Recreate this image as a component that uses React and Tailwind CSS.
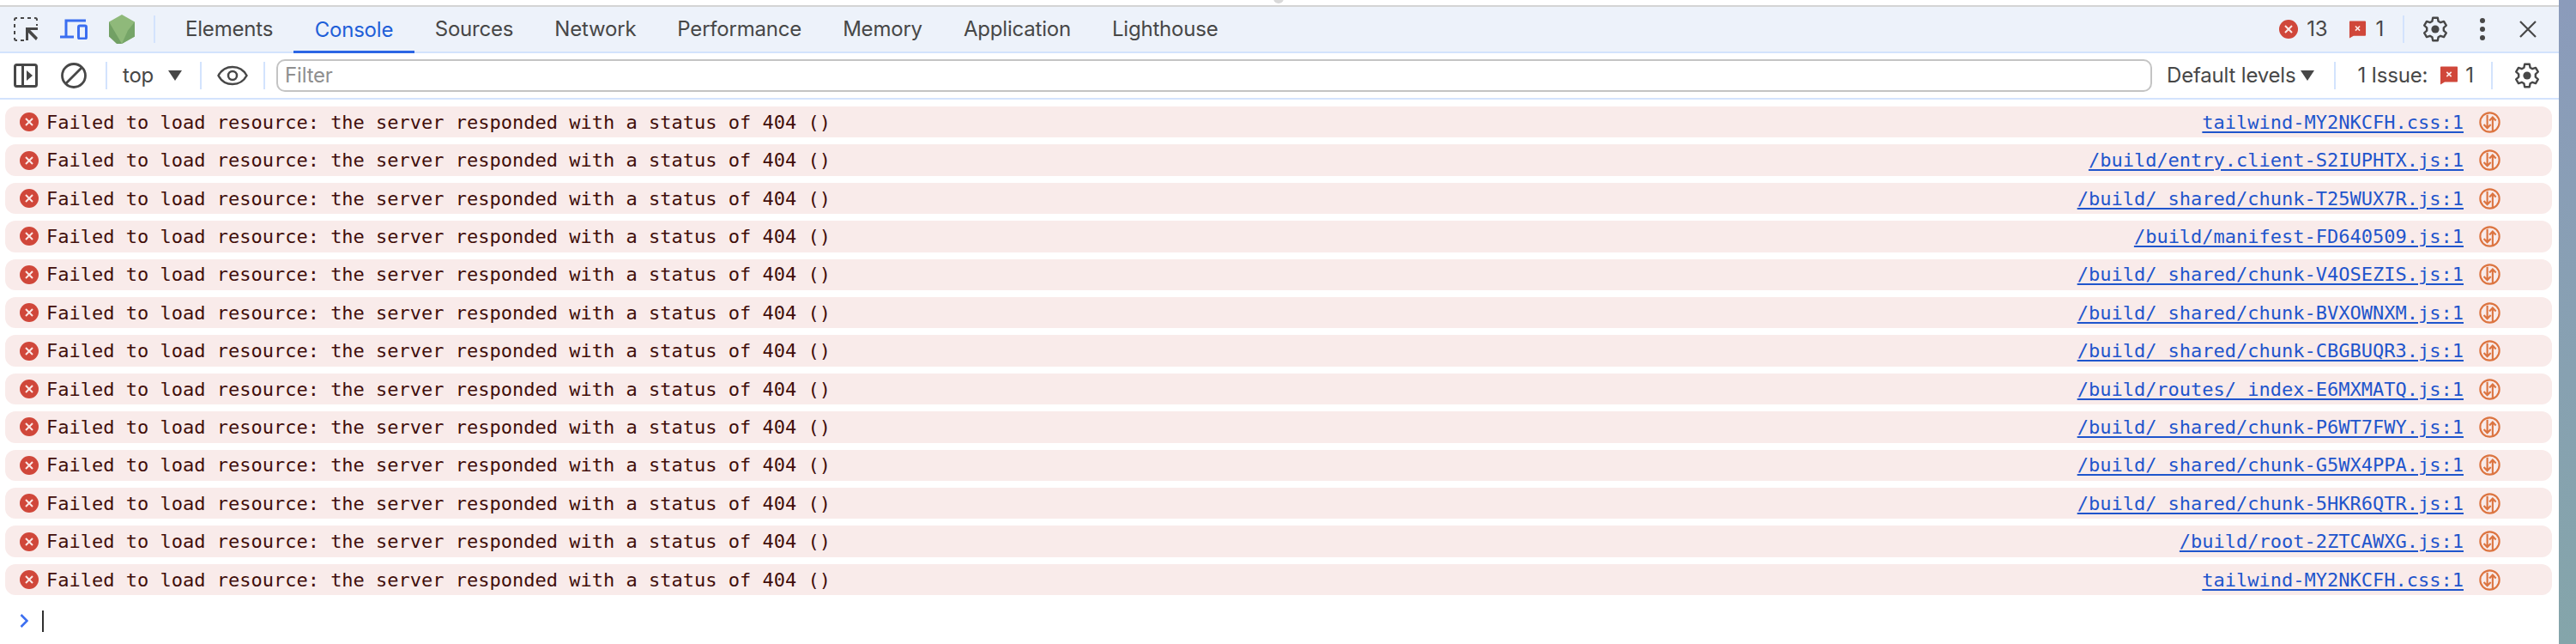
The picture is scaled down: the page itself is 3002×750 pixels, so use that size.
import React from 'react';

const ErrorIcon = ({ className }) => (
    <svg viewBox="0 0 22 22" className={className}>
        <circle cx="11" cy="11" r="11" fill="#d0473a" />
        <path d="M7 7l8 8M15 7l-8 8" stroke="#fbe9e7" strokeWidth="2" fill="none" />
    </svg>
);

const IssueIcon = ({ className }) => (
    <svg viewBox="0 0 22 22" className={className}>
        <path d="M1 1.5C1 .8 1.5.5 2 .5h18c.6 0 1 .4 1 1v16c0 .6-.4 1-1 1H6l-5 3z" fill="#d0473a" />
        <path d="M8.3 6.8l5.4 5.4M13.7 6.8l-5.4 5.4" stroke="#fbe9e7" strokeWidth="1.7" fill="none" />
    </svg>
);

const GearIcon = ({ className }) => (
    <svg viewBox="0 0 30 30" fill="none" className={className}>
        <path
            d="M12.2 1.8h5.6l.8 3.9 2.6 1.5 3.8-1.3 2.8 4.8-3 2.6v3.4l3 2.6-2.8 4.8-3.8-1.3-2.6 1.5-.8 3.9h-5.6l-.8-3.9-2.6-1.5-3.8 1.3-2.8-4.8 3-2.6v-3.4l-3-2.6 2.8-4.8 3.8 1.3 2.6-1.5z"
            stroke="#474747"
            strokeWidth="2.4"
            strokeLinejoin="round"
        />
        <circle cx="15" cy="15" r="4.6" fill="#474747" />
    </svg>
);

const NetworkIcon = () => (
    <svg viewBox="0 0 26 26" fill="none" className="w-[25px] h-[25px] shrink-0">
        <circle cx="13" cy="13" r="11.6" stroke="#dc7440" strokeWidth="2.2" />
        <path d="M10 4v16M5.8 15.6l4.2 4.4 4.2-4.4" stroke="#dc7440" strokeWidth="2.2" />
        <path d="M16.5 24V7M12.6 11l3.9-4.2 3.9 4.2" stroke="#dc7440" strokeWidth="2.2" />
    </svg>
);

const Divider = ({ className }) => <div className={`w-0.5 h-8 bg-[#d3e3fd] shrink-0 ${className}`} />;

const tabs = ['Elements', 'Console', 'Sources', 'Network', 'Performance', 'Memory', 'Application', 'Lighthouse'];

const files = [
    'tailwind-MY2NKCFH.css:1',
    '/build/entry.client-S2IUPHTX.js:1',
    '/build/_shared/chunk-T25WUX7R.js:1',
    '/build/manifest-FD640509.js:1',
    '/build/_shared/chunk-V4OSEZIS.js:1',
    '/build/_shared/chunk-BVXOWNXM.js:1',
    '/build/_shared/chunk-CBGBUQR3.js:1',
    '/build/routes/_index-E6MXMATQ.js:1',
    '/build/_shared/chunk-P6WT7FWY.js:1',
    '/build/_shared/chunk-G5WX4PPA.js:1',
    '/build/_shared/chunk-5HKR6QTR.js:1',
    '/build/root-2ZTCAWXG.js:1',
    'tailwind-MY2NKCFH.css:1',
];

const TopBar = () => (
    <div className="h-[54px] flex items-center bg-[#edf2fa] border-b-2 border-[#d3e3fd] text-[24px] tracking-[-0.2px] text-[#474747] font-['Inter',sans-serif]">
        <svg viewBox="0 0 28 28" fill="none" className="w-7 h-7 ml-4 shrink-0">
            <path d="M12 27H8M4 27H3c-1 0-2-1-2-2v-1M1 20v-4M1 12V8M1 4V3c0-1 1-2 2-2h1M8 1h4M16 1h4M24 1h1c1 0 2 1 2 2v1M27 8v2" stroke="#474747" strokeWidth="2" />
            <path d="M14 12h14v3h-8.800l8.800 9-2 3-9-9v9h-3z" fill="#474747" />
        </svg>
        <svg viewBox="0 0 32 24" className="w-8 h-6 ml-[26px] shrink-0" fill="none">
            <path d="M30 2H7v18M0 21h16" stroke="#3b6ef0" strokeWidth="3" />
            <rect x="21.500" y="8" width="9" height="15" rx="1.500" stroke="#3b6ef0" strokeWidth="3" />
        </svg>
        <svg viewBox="0 0 30 34" className="w-[30px] h-[34px] ml-[25px] shrink-0">
            <path d="M15 0l15 8.500v17L15 34 0 25.500v-17z" fill="#8fb97a" />
            <path d="M0 8.500L15 34l-6 0-9-8.500z" fill="#72a064" />
            <path d="M30 8.500l-8 10L15 34l15-8.500z" fill="#76a568" />
        </svg>
        <Divider className="ml-[22px]" />
        <div className="flex h-full ml-[11px]">
            {tabs.map((tab) => (
                <div
                    key={tab}
                    className={
                        tab === 'Console'
                            ? 'px-[24.500px] flex items-center text-[#1f5fd8] border-b-[3px] border-[#2b66e4] pt-[3px] -mb-[2px]'
                            : 'px-[24px] flex items-center'
                    }
                >
                    {tab}
                </div>
            ))}
        </div>
        <div className="ml-auto flex items-center">
            <ErrorIcon className="w-[22px] h-[22px]" />
            <span className="ml-2.5">13</span>
            <IssueIcon className="w-[21px] h-[21px] ml-[25px]" />
            <span className="ml-2.5">1</span>
            <Divider className="ml-[22px]" />
            <GearIcon className="w-[30px] h-[30px] ml-[21px]" />
            <div className="flex flex-col gap-1 ml-[37px]">
                <div className="w-[6px] h-[6px] rounded-full bg-[#474747]" />
                <div className="w-[6px] h-[6px] rounded-full bg-[#474747]" />
                <div className="w-[6px] h-[6px] rounded-full bg-[#474747]" />
            </div>
            <svg viewBox="0 0 20 20" className="w-5 h-5 ml-[40px] mr-[26px]" fill="none">
                <path d="M1 1l18 18M19 1L1 19" stroke="#474747" strokeWidth="2.200" />
            </svg>
        </div>
    </div>
);

const FilterBar = () => (
    <div className="h-[54px] flex items-center border-b-2 border-[#d3e3fd] text-[24px] tracking-[-0.2px] text-[#474747] font-['Inter',sans-serif]">
        <svg viewBox="0 0 28 28" fill="none" className="w-7 h-7 ml-4 shrink-0">
            <rect x="1.500" y="1.500" width="25" height="25" rx="2" stroke="#474747" strokeWidth="3" />
            <path d="M10.500 2v24" stroke="#474747" strokeWidth="3" />
            <path d="M15 8l7 6-7 6z" fill="#474747" />
        </svg>
        <svg viewBox="0 0 30 30" fill="none" className="w-[30px] h-[30px] ml-[27px] shrink-0">
            <circle cx="15" cy="15" r="13.500" stroke="#474747" strokeWidth="2.800" />
            <path d="M5.500 24.500l19-19" stroke="#474747" strokeWidth="2.800" />
        </svg>
        <Divider className="ml-[22px]" />
        <span className="ml-[18px]">top</span>
        <div className="ml-[17px] w-0 h-0 border-x-8 border-x-transparent border-t-[12px] border-t-[#474747]" />
        <Divider className="ml-[21px]" />
        <svg viewBox="0 0 36 24" fill="none" className="w-9 h-6 ml-[18px] shrink-0">
            <path d="M1.500 12C5 5.500 11 2 18 2s13 3.500 16.500 10C31 18.500 25 22 18 22S5 18.500 1.500 12z" stroke="#474747" strokeWidth="2.500" />
            <circle cx="18" cy="12" r="5" stroke="#474747" strokeWidth="2.500" />
        </svg>
        <Divider className="ml-[18px]" />
        <div className="ml-[13px] w-[2186px] h-[38px] border-2 border-[#c4c4c4] rounded-[10px] flex items-center pl-2 text-[#8f8f8f]">
            Filter
        </div>
        <span className="ml-[17px]">Default levels</span>
        <div className="ml-1.5 w-0 h-0 border-x-8 border-x-transparent border-t-[12px] border-t-[#474747]" />
        <Divider className="ml-[23px]" />
        <span className="ml-[25px]">1 Issue:</span>
        <IssueIcon className="w-[22px] h-[22px] ml-[14px]" />
        <span className="ml-2">1</span>
        <Divider className="ml-[20px]" />
        <GearIcon className="w-[30px] h-[30px] ml-[25px]" />
    </div>
);

const LogRow = ({ file }) => (
    <div className="h-[36.420px] flex items-center rounded-xl bg-[#f9ebea] pl-[17px] pr-[60px]">
        <ErrorIcon className="w-[22px] h-[22px] shrink-0" />
        <span className="ml-[9px] text-[#410e0b] whitespace-pre">
            Failed to load resource: the server responded with a status of 404 ()
        </span>
        <a className="ml-auto text-[#1f55cc] underline decoration-2 underline-offset-[3px]">{file}</a>
        <div className="ml-[18px]">
            <NetworkIcon />
        </div>
    </div>
);

const App = () => {
    return (
        <div className="w-[3002px] h-[750px] flex bg-white overflow-hidden relative">
            {/* sliver of the window's drag handle above the panel */}
            <div className="absolute left-[1484px] -top-2 w-3 h-3 rounded-full bg-[#d9d9d9]" />
            <div className="w-[2982px] shrink-0 flex flex-col">
                <div className="h-2 border-b-2 border-[#d4d4d4] shrink-0" />
                <TopBar />
                <FilterBar />
                <div className="pt-2 pl-1.5 pr-2 flex flex-col gap-2 font-['DejaVu_Sans_Mono',monospace] text-[22px]">
                    {files.map((file, index) => (
                        <LogRow key={index} file={file} />
                    ))}
                </div>
                <div className="flex items-center h-[26px] mt-[17px] pl-[23px]">
                    <svg viewBox="0 0 10 16" fill="none" className="w-2.5 h-4 shrink-0">
                        <path d="M1.500 1l7 7-7 7" stroke="#3b6ef0" strokeWidth="2.500" />
                    </svg>
                    <div className="w-0.5 h-[25px] bg-[#303030] ml-4" />
                </div>
            </div>
            <div className="flex-1 bg-gradient-to-b from-[#8b9bbb] to-[#84a5aa]" />
        </div>
    );
};

export default App;
